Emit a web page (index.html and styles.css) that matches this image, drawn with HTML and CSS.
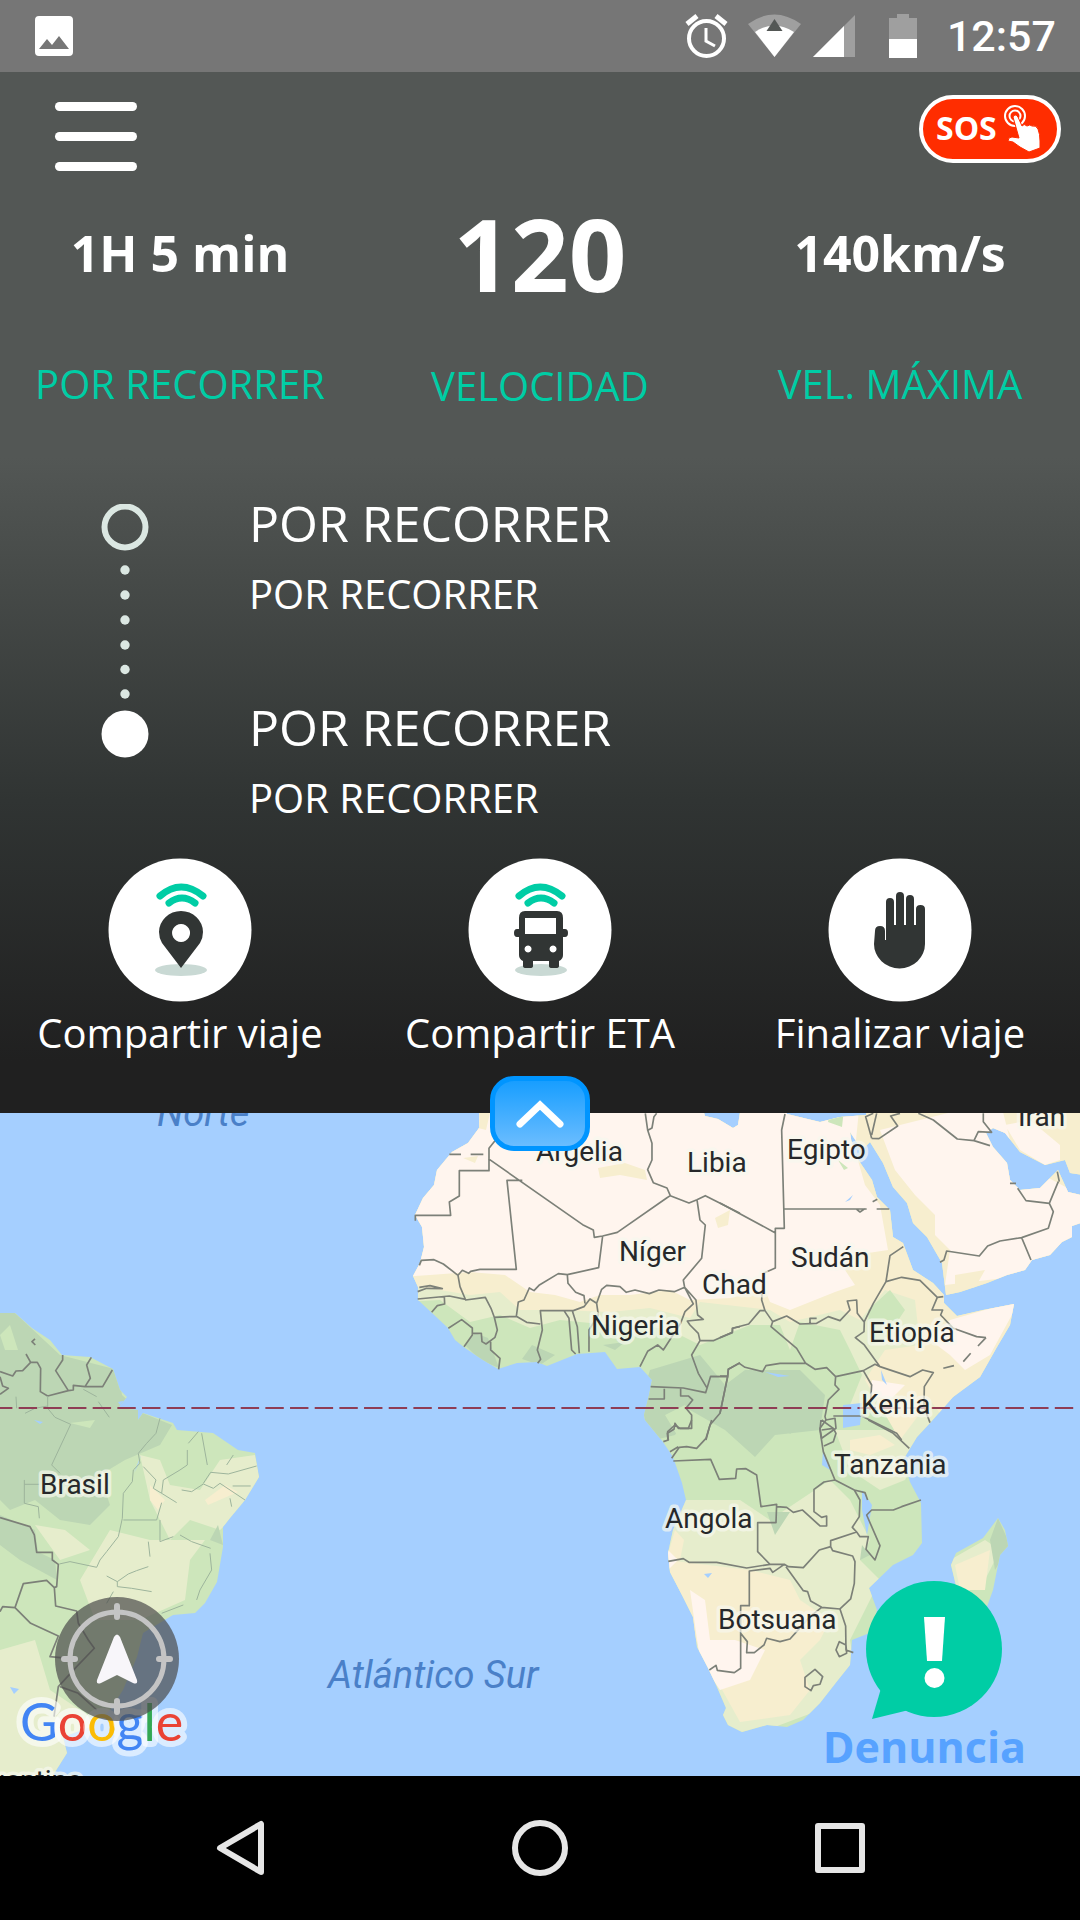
FILE: index.html
```html
<!DOCTYPE html>
<html lang="es">
<head>
<meta charset="utf-8">
<meta name="viewport" content="width=device-width, initial-scale=1">
<title>Viaje en curso</title>
<link rel="stylesheet" href="styles.css">
</head>
<body>
<header class="status">
  <svg width="38" height="40" viewBox="0 0 38 40" aria-hidden="true"><path fill="#fff" fill-rule="evenodd" d="M4 0h30q4 0 4 4v32q0 4-4 4H4q-4 0-4-4V4q0-4 4-4zm0 33h30L24 20l-7 9-5-6z"/></svg>
  <div class="status-right">
    <svg width="240" height="48" viewBox="684 12 240 48" aria-hidden="true">
      <g fill="none" stroke="#fff"><circle cx="707.500" cy="38.500" r="17.500" stroke-width="4"/><path stroke-width="3" d="M707 28v13l9 5"/><path stroke-width="5" d="M688 24l10-8M727 24l-10-8"/></g>
      <path fill="#9f9f9f" d="M749 24q26-19 53 0l-26.500 33z"/><path fill="#fff" d="M756 32q19-13 39 0l-19.500 25z"/><path fill="#535755" d="M775.500 19l8 12h-16z"/>
      <path fill="#9f9f9f" d="M856 15v42h-42z"/><path fill="#fff" d="M845 26v31h-31z"/>
      <path fill="#9f9f9f" d="M890 18h8v-4h12v4h8v22h-28z"/><path fill="#fff" d="M890 39h28v19h-28z"/>
    </svg>
    <time>12:57</time>
  </div>
</header>

<main class="app">
  <section class="panel">
    <div class="topbar">
      <button class="menu" aria-label="Menú"><span></span><span></span><span></span></button>
      <button class="sos">SOS
        <svg width="36" height="48" viewBox="0 0 36 48" aria-hidden="true">
          <g fill="none" stroke="#fff" stroke-width="2"><circle cx="11" cy="12" r="10"/><circle cx="11" cy="12" r="5.500"/></g>
          <path fill="#fff" stroke="#ff2d00" stroke-width="1" d="M9 13q2-4 5 0l4 9q2-3 5 0 3-2 5 0 4-1 6 3 2 5 2 12v7L25 48l-9-5-7-5-5-1q0-4 4-4l7 1z"/>
        </svg>
      </button>
    </div>

    <dl class="stats">
      <div class="stat"><dd>1H 5 min</dd><dt>POR RECORRER</dt></div>
      <div class="stat stat-main"><dd>120</dd><dt>VELOCIDAD</dt></div>
      <div class="stat"><dd>140km/s</dd><dt>VEL. MÁXIMA</dt></div>
    </dl>

    <div class="route">
      <svg class="route-line" width="48" height="256" viewBox="0 0 48 256" aria-hidden="true">
        <circle cx="24" cy="23" r="20.500" fill="none" stroke="#dbe7e2" stroke-width="6"/>
        <g fill="#dbe7e2"><circle cx="24" cy="66" r="4.700"/><circle cx="24" cy="91" r="4.700"/><circle cx="24" cy="116" r="4.700"/><circle cx="24" cy="141" r="4.700"/><circle cx="24" cy="165.500" r="4.700"/><circle cx="24" cy="190" r="4.700"/></g>
        <circle cx="24" cy="230" r="23.500" fill="#fff"/>
      </svg>
      <ol class="stops">
        <li><h2>POR RECORRER</h2><p>POR RECORRER</p></li>
        <li><h2>POR RECORRER</h2><p>POR RECORRER</p></li>
      </ol>
    </div>

    <div class="actions">
      <button>
        <svg width="144" height="144" viewBox="0 0 144 144" aria-hidden="true">
          <circle cx="72" cy="72" r="71.500" fill="#fff"/><ellipse cx="73" cy="112" rx="26" ry="6" fill="#c9d9d4"/>
          <path fill="none" stroke="#00cda5" stroke-width="7" stroke-linecap="round" d="M52 38q21-18 43 0M61 45q13-10 26 0"/>
          <path fill="#313534" fill-rule="evenodd" d="M73 110L54 85q-3-5-3-11a22 21 0 0 1 44 0q0 6-3 11zM73 66a9 9 0 1 0 .1 0z"/>
        </svg>
        Compartir viaje
      </button>
      <button>
        <svg width="144" height="144" viewBox="0 0 144 144" aria-hidden="true">
          <circle cx="72" cy="72" r="71.500" fill="#fff"/><ellipse cx="73" cy="112" rx="26" ry="6" fill="#c9d9d4"/>
          <path fill="none" stroke="#00cda5" stroke-width="7" stroke-linecap="round" d="M51 38q21-18 43 0M60 45q13-10 26 0"/>
          <path fill="#313534" fill-rule="evenodd" d="M57 53h32q6 0 6 7v11h2q3 0 3 4t-3 4h-2v18q0 4-4 6v5q0 2-3 2h-4q-3 0-3-2v-5H65v5q0 2-3 2h-4q-3 0-3-2v-5q-4-2-4-6V79h-2q-3 0-3-4t3-4h2V60q0-7 6-7zm0 7v16h31V60zM60 87.500a3.500 3.500 0 1 0 .1 0zM85 87.500a3.500 3.500 0 1 0 .1 0z"/>
        </svg>
        Compartir ETA
      </button>
      <button>
        <svg width="144" height="144" viewBox="0 0 144 144" aria-hidden="true">
          <circle cx="72" cy="72" r="71.500" fill="#fff"/>
          <path fill="#313534" d="M47 73q0-5 5-5t5 5v9h1V44q0-4 4-4t4 4v23h2V38q0-4 4-4t4 4v29h2V41q0-4 4-4t4 4v26h2V51q0-4 4.500-4t4.500 4v35a25 24 0 0 1-51 0z"/>
        </svg>
        Finalizar viaje
      </button>
    </div>
  </section>

  <section class="map" aria-label="Mapa">
    <svg class="map-art" viewBox="0 1113 1080 663" preserveAspectRatio="xMidYMid slice" role="img" aria-label="Atlántico Sur, África y Brasil">
      <defs>
        <clipPath id="land"><path d="M480 1100L479 1128 468 1143 452 1152 437 1170 434 1185 423 1198 415 1215 422 1227 424 1247 420 1263 413 1276 418 1287 418 1300 432 1313 448 1328 455 1340 465 1348 483 1360 498 1369 517 1363 537 1362 547 1366 577 1354 605 1352 617 1369 640 1367 652 1380 649 1395 644 1415 645 1420 663 1442 673 1457 682 1483 686 1500 673 1530 668 1553 670 1572 683 1597 693 1617 697 1647 708 1668 717 1687 726 1708 723 1715 728 1725 742 1732 767 1725 787 1727 803 1720 820 1703 838 1680 850 1665 852 1640 872 1632 877 1610 869 1588 893 1565 913 1555 922 1543 921 1503 910 1482 903 1460 917 1437 930 1423 953 1397 980 1377 997 1347 1010 1325 1014 1304 983 1310 957 1316 944 1303 944 1295 933 1283 913 1270 903 1243 893 1237 890 1210 877 1197 872 1180 853 1152 850 1132 862 1150 870 1142 883 1163 893 1187 907 1203 913 1223 927 1237 942 1263 946 1295 960 1292 987 1283 1007 1275 1025 1270 1032 1260 1050 1255 1062 1242 1072 1237 1072 1226 1090 1220V1197L1068 1192 1058 1170 1040 1188 1020 1190 1010 1180 1007 1163 993 1147 986 1133 993 1128 1005 1133 1020 1152 1045 1165 1065 1160 1070 1173 1090 1176V1100H869L866 1115 840 1117 820 1122 787 1114V1100H742L738 1125 733 1128 718 1119 705 1116 700 1100ZM998 1518L1005 1530 1008 1546 1000 1555 993 1590 975 1640 963 1650 950 1630 957 1590 951 1565 956 1553 983 1538ZM0 1313H15L32 1328 50 1340 62 1355 90 1357 113 1369 120 1390 127 1397 118 1408 138 1410V1420L143 1413 173 1423 177 1430 213 1433 238 1450 255 1453 259 1477 245 1500 230 1518 223 1527V1547L217 1582 205 1603 195 1613 173 1615 143 1633 137 1657 123 1690 110 1710 90 1727 63 1737 67 1753 50 1780H0Z"/></clipPath>
      </defs>
      <rect y="1113" width="1080" height="663" fill="#a5cfff"/>
      <g clip-path="url(#land)">
        <path fill="#cde6bb" d="M0 1100h1090v680H0z"/>
        <!-- savanna -->
        <path fill="#e6edcc" d="M400 1100H1090V1440H905L890 1410 850 1405 862 1375 850 1350 840 1330 800 1322 790 1350 780 1325 750 1325 700 1345 670 1330 640 1325 610 1325 560 1320 530 1328 500 1315 470 1322 440 1300 400 1302ZM660 1500L740 1500 770 1520 800 1500 830 1480 850 1500 870 1540 860 1560 880 1580 850 1640 855 1670 820 1710 740 1740 650 1640ZM835 1430H930L905 1480 880 1490 850 1470ZM950 1560L985 1540 1000 1550 985 1580 955 1600ZM110 1530L150 1540 205 1540 190 1560 185 1600 140 1620 95 1620 80 1580ZM0 1650L35 1640 50 1690 95 1720 60 1780H0ZM140 1455L160 1460 170 1485 200 1490 220 1460 255 1455 262 1490 220 1530 190 1520 170 1540 150 1500ZM35 1525L65 1530 90 1550 60 1560ZM0 1325H15V1340L5 1348ZM26 1358L38 1370 42 1385 28 1382Z"/>
        <!-- semi-arid -->
        <path fill="#f7eecf" d="M400 1100H1090V1250L1020 1400 945 1420 930 1400 900 1440 865 1380 885 1350 920 1345 915 1300 885 1290 860 1320 840 1310 790 1322 770 1310 700 1302 690 1318 650 1308 610 1312 560 1310 520 1310 500 1292 470 1295 440 1290 400 1285ZM665 1560L750 1570 790 1580 800 1600 830 1620 820 1640 800 1660 810 1690 790 1715 740 1722 700 1650ZM675 1530L684 1540 680 1560 665 1565ZM955 1565L990 1550 985 1590 960 1590ZM850 1440L880 1435 895 1445 870 1455 850 1450ZM150 1485L165 1500 158 1510 150 1500ZM205 1500L225 1485 238 1492 208 1505ZM30 1365L38 1372 36 1383 27 1380Z"/>
        <!-- desert -->
        <path fill="#fff5ee" d="M400 1100H860L855 1150 865 1185 880 1205 888 1250 855 1255 845 1270 855 1285 835 1292 815 1300 790 1310 770 1302 765 1290 730 1298 690 1300 670 1290 630 1295 600 1295 580 1302 555 1295 530 1292 505 1275 470 1272 430 1275 400 1277ZM880 1130L1000 1100 1015 1160 1090 1200V1250L1030 1275 945 1285 950 1250 935 1235 935 1215 915 1195 895 1170ZM950 1320L1020 1300 990 1355 965 1370 950 1355 930 1340ZM690 1590L705 1600 710 1640 735 1640 765 1650 750 1680 720 1690 700 1660ZM668 1550L678 1560 668 1570ZM872 1380L905 1385 890 1400 870 1395ZM1005 1125L1030 1120 1060 1145 1060 1160 1045 1165 1020 1150Z"/>
        <path fill="#f7eecf" d="M598 1168L625 1163 645 1170 647 1180 620 1175 600 1178ZM463 1158L478 1156 475 1163ZM478 1113H490L486 1130 478 1128ZM715 1218L730 1210 728 1225 718 1228ZM955 1275L985 1270 975 1288 955 1285Z"/>
        <!-- rainforest -->
        <path fill="#bcd6b4" d="M650 1370L700 1355 725 1385 745 1370 800 1370 825 1395 820 1430 775 1435 755 1457 725 1430 690 1410 675 1435 655 1440 635 1420ZM522 1359L532 1345 555 1355 540 1365ZM465 1345L475 1333 488 1338 499 1368 480 1360ZM603 1345L625 1342 615 1350ZM778 1420L800 1428 790 1434ZM998 1518L1010 1545 995 1570 990 1540ZM767 1512L790 1512 775 1535ZM0 1313H15L60 1355 118 1370 122 1395 140 1412 172 1425 160 1445 125 1460 100 1475 110 1505 90 1525 60 1520 35 1500 10 1510 0 1500ZM0 1515L35 1530 38 1552 55 1560 57 1580 20 1560 0 1545ZM218 1525L223 1545 210 1540ZM862 1545L870 1555 860 1560Z"/>
        <path fill="#cde6bb" d="M665 1415L685 1405 700 1430 680 1440ZM833 1100H845L842 1127 828 1122ZM838 1160L848 1168 844 1170ZM868 1310L890 1290 905 1310 885 1340 870 1345ZM70 1423L95 1420 90 1428ZM0 1335L10 1325 18 1350 5 1350Z"/>
        <!-- lakes -->
        <path fill="#a5cfff" d="M843 1405L862 1403 860 1425 843 1428ZM881 1370L887 1385 882 1380ZM862 1490L872 1505 867 1535 862 1510ZM823 1450L830 1470 822 1465ZM704 1574L712 1573 708 1578ZM765 1372L790 1376 778 1377ZM845 1202L853 1195 850 1200ZM34 1420L43 1422 40 1424ZM138 1465L141 1455 134 1473ZM10 1687L19 1689 14 1694ZM118 1402L128 1400 122 1408Z"/>
      </g>
      <!-- country borders, grouped by map tile -->
      <g class="border">
        <path transform="translate(380 1100) scale(.3333)" d="M345 122L327 145V212H238V288L208 306 212 346H106V362M325 176L608 374 640 390 643 412 668 408 712 397 860 294 871 287 861 264 820 248 803 209 816 180V130L803 90 796 40M805 90L816 84 822 50 830 40M427 241H381L409 508H300L272 514 266 520 247 511 234 526 190 492 162 479 124 481 118 496M234 526L240 560 257 600 316 592 333 625 343 652 409 649 415 606 432 600 448 564 462 572 477 556 535 521 562 524 656 503 668 408M871 287L927 309 951 299 976 287 1080 340M951 299L960 360 976 375 965 475 910 540 914 562 883 575 837 570 808 581 765 570 739 577 720 560 680 556 665 568 650 610 630 597 612 620 580 632H481L487 690 472 750 482 778 473 790M562 524L564 550 587 577 612 587 615 610M650 610L655 645 627 690V755M552 632L567 655 575 750 587 762M577 632L592 680 598 760M409 649L440 667 481 672M113 575L140 565 187 566 150 557 118 562M113 597L208 588 257 598M193 590L194 612 172 617 155 637M205 685L245 659 277 684V705L252 740M277 700H304L306 725 318 732 345 712 352 690 343 652M332 725V750L360 775 356 808M914 562L940 612 915 635 902 670 850 750 833 735 803 754 780 800M914 562L948 600 953 645 970 658 922 663 930 675 955 700 960 722 935 765 955 820 980 862M960 722H1000L1057 697V685L1080 680M812 860L910 864 977 878 992 829 1043 830 1045 808 1080 788M1043 830L1020 940 990 975 978 1020M853 866V897H806M902 866V888H925L938 900 918 925 935 945 935 985H895L885 970 882 988 862 1000 864 1020M208 163H243M272 163H310"/>
        <path transform="translate(720 1100) scale(.3333)" d="M195 42L185 90 193 385H166V504L130 520 125 600 135 632H120L86 672 38 685 37 698 0 713M0 309L165 398M193 327H440M410 328L420 336 435 326M470 327H508M458 305L472 298M550 440L510 467 498 545 460 610 433 665 432 695 406 713 433 735 480 800 570 830 608 810 640 818 613 860 612 920 630 968M498 545L545 532 600 541 652 592 670 590M652 592L636 630H668L662 645 700 685 770 710 798 713M798 713L774 738M752 760L730 785M702 797L670 805M135 632L158 665 200 648 240 672 290 670 325 650 360 662 390 630 382 603 410 600 412 640 433 667M290 655H270V670M158 665L153 680 230 745 257 790 285 808 320 803 347 830 430 812 465 793 480 800M257 790H180L138 797 128 815 75 802 58 790 25 808 23 830 0 940M0 828H23M347 830L345 855 357 868 325 900 315 950 318 960M430 812L455 855 450 930M340 948H425L530 1000 545 1020M318 960L345 955 348 985 305 1015 300 985ZM305 990L340 985M660 487L672 480 680 453 778 468 803 438 840 423 905 413 985 385 1000 335 988 310 1015 245M988 310L918 302 893 265M905 413L933 480M870 250H888M1012 215L1018 245M595 40L640 60 712 117 762 122 810 137M762 122L775 95 815 97 790 65V40M455 115L477 116 533 78 512 48 540 40M455 115L437 50 460 40M455 105L470 40"/>
        <path transform="translate(620 1420) scale(.3333)" d="M130 65L145 60 143 35 165 15 180 25 205 25 215 0M275 0L258 55 230 85 200 80 178 82 155 115M150 95L175 80M160 123L272 118 298 178 347 175 350 147 378 146 410 165 423 260 470 253 468 308H413V395L450 433M470 260L500 262 520 277 547 270 600 318H620V288L605 292 582 275V208L612 186 645 180 610 95 600 30 603 0M605 0L640 25 648 40 640 65 612 78M145 424L190 416 207 427H290L380 444 450 433H493L458 457 450 445 388 453V557H362V745L343 758 292 751 288 736 268 750M493 433L505 440 550 443 598 390 632 380V362L710 336 720 350H745L738 388 765 420 780 377 740 285 755 270H820L845 260 903 240M645 180L703 210 720 240 718 290 697 322 710 336M703 210L735 218 743 240M632 380L638 392 698 408 705 425 703 490 692 537 660 567 605 562 572 543 563 515 550 512 498 440M605 562L570 590 530 635 510 657 480 665 440 655 432 675 403 698H380L382 665 362 640M660 567L677 618 678 690 700 698M658 665L678 675 680 700 658 710 648 690ZM585 748L608 770 600 793 580 797 573 812 555 800V772ZM745 0L820 40 868 85"/>
        <path transform="translate(0 1280) scale(.3333)" d="M0 275L38 288 48 273 68 272 92 247 112 247 122 265 121 335 143 348 205 332 167 272 188 240V225M78 222L92 247M205 332L220 330V316L255 320 271 295 260 255 274 232M255 320H308L337 270M0 290L8 318 25 325 0 343M105 177L96 185 106 195M0 713L90 740 103 765 110 817H157V840L175 853 170 920 163 923 167 978 230 993 235 1030M163 923L140 901 70 911 45 983 8 980 0 995M45 983L92 1030 175 1068 150 1130 205 1135M235 1030L265 1080 283 1105 230 1160 175 1220 162 1310M180 1220L235 1240 290 1290"/>
      </g>
      <path class="state" transform="translate(0 1280) scale(.3333)" d="M143 348V385L165 412 212 433 155 555 180 580M48 350L50 385M75 400L105 385 143 378M250 328L290 350M295 365L328 412M480 415L468 460 440 490 415 520 420 550 400 570 397 605 370 640 367 715 355 770 320 815 300 840 290 862 210 845 178 852M430 560L468 600 460 625 485 640 530 668M485 640L490 600 540 570 562 555V510M485 668L470 720H370M480 720V785L520 770M565 490L595 455M605 460L622 555M610 610L632 577 685 582 770 558M545 630L575 635 610 612 640 625 660 610 735 660M698 618H752M690 655L695 680M680 555L700 525M540 765L575 785 632 805M630 820L635 870 600 930 590 960M445 860L410 872 385 882 352 905 320 888M352 905V920L395 925 455 935M445 785L450 830M485 1000L550 975M73 600V670L115 680 118 715M73 613H118M340 935L320 970"/>
      <path class="equator" d="M-6 1408H1076"/>
      <g class="country">
        <text x="536" y="1161">Argelia</text><text x="687" y="1172">Libia</text><text x="787" y="1159">Egipto</text><text x="1018" y="1126">Irán</text>
        <text x="619" y="1261">Níger</text><text x="702" y="1294">Chad</text><text x="791" y="1267">Sudán</text><text x="591" y="1335">Nigeria</text>
        <text x="869" y="1342">Etiopía</text><text x="861" y="1414">Kenia</text><text x="834" y="1474">Tanzania</text><text x="665" y="1528">Angola</text>
        <text x="718" y="1629">Botsuana</text><text x="40" y="1494">Brasil</text><text x="-38" y="1790">Argentina</text>
      </g>
      <g class="ocean"><text x="157" y="1126">Norte</text><text x="328" y="1688">Atlántico Sur</text></g>
      <text class="google" x="20" y="1741"><tspan fill="#4285f4">G</tspan><tspan fill="#ea4335">o</tspan><tspan fill="#fbbc05">o</tspan><tspan fill="#4285f4">g</tspan><tspan fill="#34a853">l</tspan><tspan fill="#ea4335">e</tspan></text>
    </svg>

    <button class="expand" aria-label="Contraer panel"><svg width="50" height="30" viewBox="0 0 50 30" aria-hidden="true"><path d="M5 25L25 6 45 25"/></svg></button>

    <button class="locate" aria-label="Mi ubicación">
      <svg width="124" height="124" viewBox="0 0 124 124" aria-hidden="true">
        <circle cx="62" cy="62" r="62" fill="#4b4b4b" fill-opacity=".7"/>
        <g fill="none" stroke="#c4c4c4"><circle cx="62" cy="62" r="47" stroke-width="5"/><path stroke-width="6" stroke-linecap="round" d="M62 9v11M62 104v11M9 62h11M104 62h11"/></g>
        <path fill="#f8f6fa" d="M59 40q3-5 6 0l17 43q1 5-4 3L62 78 46 86q-5 2-4-3z"/>
      </svg>
    </button>

    <button class="report">
      <svg width="136" height="140" viewBox="0 0 136 140" aria-hidden="true"><circle cx="68" cy="68" r="68" fill="#00cda5"/><path fill="#00cda5" d="M16 104L6 138l37-9z"/><path fill="#fff" d="M58 36h21l-3 44H61z"/><circle cx="68.500" cy="97" r="10" fill="#fff"/></svg>
      Denuncia
    </button>
  </section>
</main>

<nav class="navbar" aria-label="Navegación del sistema">
  <button aria-label="Atrás"><svg width="60" height="60" viewBox="0 0 60 60"><path d="M10 30L51 6v48z"/></svg></button>
  <button aria-label="Inicio"><svg width="60" height="60" viewBox="0 0 60 60"><circle cx="30" cy="30" r="25"/></svg></button>
  <button aria-label="Recientes"><svg width="60" height="60" viewBox="0 0 60 60"><rect x="8" y="8" width="44" height="44"/></svg></button>
</nav>
</body>
</html>
```
FILE: styles.css
```css
* { box-sizing: border-box; }

body {
  margin: 0;
  min-height: 100vh;
  display: flex;
  flex-direction: column;
  background: #000;
  color: #fff;
  font-family: "Open Sans", "Noto Sans", sans-serif;
}

svg { display: block; }

button {
  margin: 0;
  padding: 0;
  border: 0;
  background: none;
  color: inherit;
  font: inherit;
  cursor: pointer;
}

.status {
  display: flex;
  justify-content: space-between;
  align-items: center;
  height: 72px;
  padding: 0 24px 0 35px;
  background: #767676;
}
.status-right { display: flex; align-items: center; gap: 24px; }
.status time { font: 500 43px/50px Roboto, sans-serif; }

.app { flex: 1; display: flex; flex-direction: column; }

.panel {
  padding-bottom: 53px;
  background: linear-gradient(#535755 0, #535755 37%, #474b49 48%, #303433 70%, #202020 95%);
}

.topbar {
  display: flex;
  justify-content: space-between;
  min-height: 99px;
  padding: 23px 19px 0 55px;
}
.menu {
  align-self: flex-end;
  display: flex;
  flex-direction: column;
  justify-content: space-between;
  width: 82px;
  height: 69px;
}
.menu span { height: 9px; border-radius: 5px; background: #fff; }
.sos {
  align-self: flex-start;
  display: flex;
  align-items: center;
  gap: 7px;
  width: 142px;
  height: 68px;
  padding: 0 0 3px 13px;
  border: 4px solid #fff;
  border-radius: 34px;
  background: #ff2d00;
  font-size: 32px;
  font-weight: 700;
}

.stats {
  display: grid;
  grid-template-columns: repeat(3, 1fr);
  margin: 0;
  padding-top: 14px;
  text-align: center;
}
.stat { display: flex; flex-direction: column; gap: 36px; }
.stat-main { gap: 38px; }
.stat dd { margin: 0; font-size: 50px; font-weight: 700; line-height: 136px; }
.stat-main dd { font-size: 101px; }
.stat dt { color: #00cda5; font-size: 40px; line-height: 54px; }

.route { display: flex; gap: 100px; padding: 76px 40px 0 101px; }
.route-line { margin-top: 15px; }
.stops { display: flex; flex-direction: column; gap: 72px; margin: 0; padding: 0; list-style: none; }
.stops h2 { margin: 0 0 10px; font-size: 50px; font-weight: 400; line-height: 68px; }
.stops p { margin: 0; font-size: 40px; line-height: 54px; }

.actions { display: grid; grid-template-columns: repeat(3, 1fr); padding-top: 33px; }
.actions button {
  display: flex;
  flex-direction: column;
  align-items: center;
  gap: 4px;
  font-size: 40px;
  line-height: 54px;
}

.map { position: relative; flex: 1; min-height: 500px; background: #a5cfff; }
.map-art { position: absolute; width: 100%; height: 100%; }
.border { fill: none; stroke: #7c8078; stroke-width: 5; stroke-linejoin: round; }
.state { fill: none; stroke: #9db49c; stroke-width: 3; }
.equator { fill: none; stroke: #8f3d55; stroke-width: 2; stroke-dasharray: 18.400 6.270; }
.country text {
  fill: #26282a;
  stroke: #f7f8ee;
  stroke-opacity: .7;
  stroke-width: 7;
  stroke-linejoin: round;
  paint-order: stroke;
  font: 400 28px Roboto, sans-serif;
}
.ocean text { fill: #4a80c8; font: italic 400 38px Roboto, sans-serif; }
.google {
  font: 400 52px Lato, sans-serif;
  stroke: #fff;
  stroke-opacity: .6;
  stroke-width: 12;
  stroke-linejoin: round;
  paint-order: stroke;
}

.expand {
  position: absolute;
  top: -37px;
  left: calc(50% - 50px);
  display: grid;
  place-items: center;
  width: 100px;
  height: 75px;
  border: 5px solid #0095ff;
  border-radius: 24px;
  background: linear-gradient(#189eff, #6bbdff);
}
.expand path { fill: none; stroke: #fff; stroke-width: 7; stroke-linecap: round; }
.locate { position: absolute; left: 55px; bottom: 55px; }
.report {
  position: absolute;
  right: 54px;
  bottom: 3px;
  display: flex;
  flex-direction: column;
  align-items: center;
  color: #57a2ff;
  font-size: 43px;
  font-weight: 700;
  line-height: 52px;
}
.report svg { margin-left: 20px; }

.navbar {
  display: flex;
  justify-content: space-between;
  align-items: center;
  height: 144px;
  padding: 0 210px;
}
.navbar svg { fill: none; stroke: #e6e6e6; stroke-width: 6; stroke-linejoin: round; }
```
